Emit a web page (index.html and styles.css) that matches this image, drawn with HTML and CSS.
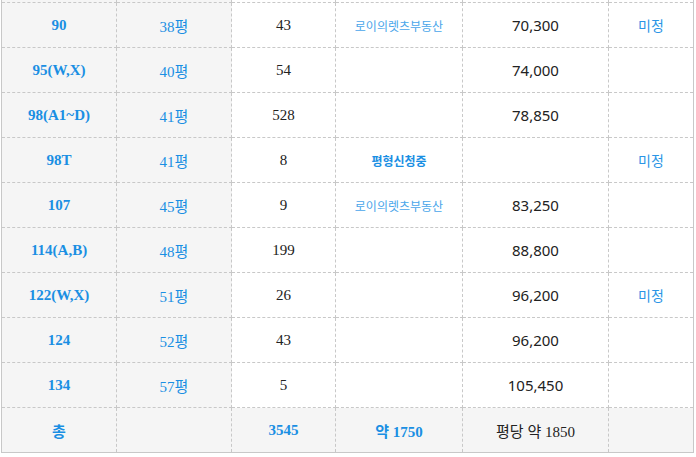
FILE: index.html
```html
<!DOCTYPE html>
<html lang="ko">
<head>
<meta charset="utf-8">
<link rel="stylesheet" href="styles.css">
</head>
<body>
<table class="price">
  <colgroup>
    <col class="c1"><col class="c2"><col class="c3"><col class="c4"><col class="c5"><col class="c6">
  </colgroup>
  <tbody>
    <tr class="cut"><td class="type"></td><td class="py"></td><td class="num"></td><td></td><td class="price-v"></td><td></td></tr>
    <tr><td class="type">90</td><td class="py">38평</td><td class="num">43</td><td class="agent">로이의렛츠부동산</td><td class="price-v">70,300</td><td class="status">미정</td></tr>
    <tr><td class="type">95(W,X)</td><td class="py">40평</td><td class="num">54</td><td></td><td class="price-v">74,000</td><td></td></tr>
    <tr><td class="type">98(A1~D)</td><td class="py">41평</td><td class="num">528</td><td></td><td class="price-v">78,850</td><td></td></tr>
    <tr><td class="type">98T</td><td class="py">41평</td><td class="num">8</td><td class="apply">평형신청중</td><td class="price-v"></td><td class="status">미정</td></tr>
    <tr><td class="type">107</td><td class="py">45평</td><td class="num">9</td><td class="agent">로이의렛츠부동산</td><td class="price-v">83,250</td><td></td></tr>
    <tr><td class="type">114(A,B)</td><td class="py">48평</td><td class="num">199</td><td></td><td class="price-v">88,800</td><td></td></tr>
    <tr><td class="type">122(W,X)</td><td class="py">51평</td><td class="num">26</td><td></td><td class="price-v">96,200</td><td class="status">미정</td></tr>
    <tr><td class="type">124</td><td class="py">52평</td><td class="num">43</td><td></td><td class="price-v">96,200</td><td></td></tr>
    <tr><td class="type">134</td><td class="py">57평</td><td class="num">5</td><td></td><td class="price-v">105,450</td><td></td></tr>
    <tr class="total"><td class="type">총</td><td></td><td class="tnum">3545</td><td class="tnum">약 1750</td><td class="avg">평당 약 1850</td><td></td></tr>
  </tbody>
</table>
</body>
</html>
```

FILE: styles.css
```css
html, body {
  margin: 0;
  padding: 0;
  background: #fff;
}
body {
  padding-left: 1px;
  overflow: hidden;
}
.price {
  border-collapse: collapse;
  table-layout: fixed;
  width: 692px;
  margin-top: -43px;
  font-family: "Liberation Serif", "Noto Sans CJK KR", serif;
  font-size: 15px;
  color: #222;
}
.c1 { width: 115px; }
.c2 { width: 115px; }
.c3 { width: 104px; }
.c4 { width: 127px; }
.c5 { width: 146px; }
.c6 { width: 85px; }
.price td {
  height: 44px;
  padding: 0;
  text-align: center;
  vertical-align: middle;
  border: 1px dashed #c8c8c8;
}
.price tr td:first-child { border-left: 1px solid #c8c8c8; }
.price tr td:last-child { border-right: 1px solid #c8c8c8; }
.price tr.total td { border-bottom: 1px solid #c8c8c8; background: #f5f5f5; }
.price td.type, .price td.py { background: #f5f5f5; }
.type {
  color: #1a8fe3;
  font-weight: bold;
}
.py {
  color: #1a8fe3;
  font-size: 15px;
}
.num { color: #222; }
.agent {
  color: #4aa6ea;
  font-family: "Noto Sans CJK KR", sans-serif;
  font-size: 12px;
}
.apply {
  color: #1a8fe3;
  font-family: "Noto Sans CJK KR", sans-serif;
  font-size: 12px;
  font-weight: bold;
}
.price-v {
  font-family: "Noto Sans", "Noto Sans CJK KR", sans-serif;
  font-size: 15px;
  color: #222;
}
.status {
  color: #2b95e6;
  font-family: "Noto Sans CJK KR", sans-serif;
  font-size: 14px;
}
.tnum {
  color: #1a8fe3;
  font-weight: bold;
}
.avg { color: #222; }
```
